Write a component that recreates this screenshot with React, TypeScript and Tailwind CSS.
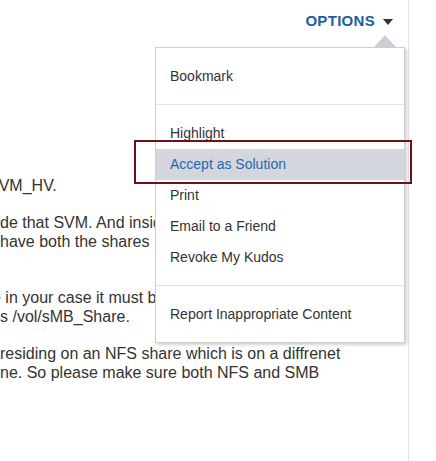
const menuGroups: { label: string; active?: boolean }[][] = [
  [{ label: "Bookmark" }],
  [
    { label: "Highlight" },
    { label: "Accept as Solution", active: true },
    { label: "Print" },
    { label: "Email to a Friend" },
    { label: "Revoke My Kudos" },
  ],
  [{ label: "Report Inappropriate Content" }],
];

function OptionsMenu() {
  return (
    <div className="absolute left-[155px] top-[47px] w-[250px] border border-[#cfcfcf] bg-white shadow-[2px_2px_3px_rgba(0,0,0,0.18)]">
      {/* caret */}
      <div className="absolute -top-[13px] right-[8px] h-0 w-0 border-x-[11px] border-b-[12px] border-x-transparent border-b-[#ccd0d6]" />
      {menuGroups.map((group, i) => (
        <div
          key={i}
          className={i < menuGroups.length - 1 ? "border-b border-[#e2e2e2] pt-[13px] pb-3" : "pt-[13px] pb-3"}
        >
          {group.map((item) => (
            <div
              key={item.label}
              className={
                item.active
                  ? "flex h-[31px] items-center bg-[#d3d7dd] px-[14px] text-[#1f67b1]"
                  : "flex h-[31px] items-center px-[14px] text-[#333333]"
              }
            >
              {item.label}
            </div>
          ))}
        </div>
      ))}
    </div>
  );
}

export default function App() {
  return (
    <div
      className="relative flex h-[461px] w-[436px] overflow-hidden bg-white text-[14px]"
      style={{ fontFamily: '"Liberation Sans", Arial, sans-serif' }}
    >
      <div className="flex w-[409px] flex-col border-r border-[#e4e4e4]">
        <div className="flex h-[42px] items-center justify-end gap-[8px] pr-[15px] pt-[1px]">
          <span className="text-[15px] font-bold tracking-[0.3px] text-[#1b5f9e]">OPTIONS</span>
          <span className="mt-[1px] h-0 w-0 border-x-[5px] border-t-[6px] border-x-transparent border-t-[#333333]" />
        </div>

        <div className="mt-[134px] text-[16px] leading-[19px] text-[#333333]">
          <p className="-ml-[12px]">SVM_HV.</p>
          <p className="mt-[18px]">de that SVM. And inside the volume you need to</p>
          <p>have both the shares</p>
          <p className="mt-[37px] -ml-[8px]">e in your case it must be</p>
          <p>s /vol/sMB_Share.</p>
          <p className="mt-[18px]">residing on an NFS share which is on a diffrenet</p>
          <p>ne. So please make sure both NFS and SMB</p>
        </div>
      </div>

      <OptionsMenu />

      {/* annotation box */}
      <div className="pointer-events-none absolute left-[134px] top-[140px] h-[44px] w-[278px] border-2 border-[#6b1218]" />
    </div>
  );
}
